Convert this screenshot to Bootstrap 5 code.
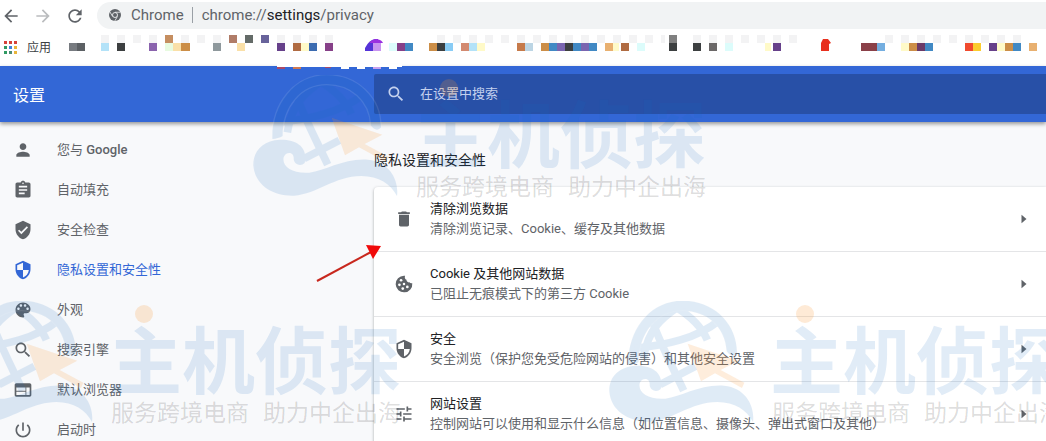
<!DOCTYPE html>
<html lang="zh-CN">
<head>
<meta charset="utf-8">
<meta name="viewport" content="width=device-width, initial-scale=1">
<title>设置 - 隐私设置和安全性</title>
<link href="https://cdn.jsdelivr.net/npm/bootstrap@5.3.0/dist/css/bootstrap.min.css" rel="stylesheet">
<style>
  body { font-family: Roboto, "Noto Sans CJK SC", sans-serif; font-size: 13px; line-height: 20px; color: #202124; background: #f8f9fb; }
  .ico { width: 20px; height: 20px; fill: #5f6368; flex: none; }
  .ico-off { fill: #babcbe; }
  .tool-btn { width: 32px; height: 30px; }
  .tool-btn .ico { margin-left: 1px; }
  .tool-row { height: 30px; }
  .url-pill { background: #f1f3f4; height: 27px; border-radius: 14px 0 0 14px; padding-left: 12px; margin-left: 1px; gap: 10px; font: 15px/20px Roboto, sans-serif; color: #5f6368; }
  .url-sep { width: 1px; height: 16px; background: #9aa0a6; margin: 0 -1px 0 -2px; }
  .url-text a { color: #202124; }
  .mark-row { height: 36px; font-size: 12px; }
  .apps { width: 69px; padding-left: 4px; gap: 9px; color: #3c4043; }
  .mosaic { height: 36px; overflow: visible; position: relative; z-index: 2; }
  .top-bar { background: #3367d6; height: 56px; box-shadow: 0 2px 4px rgba(0,0,0,.4); z-index: 1; }
  .top-title, .side { width: 374px; flex: none; }
  .top-title { font-size: 16px; line-height: 24px; color: #fff; padding: 4px 0 0 13px; }
  .search-box { background: #2850a7; height: 40px; border-radius: 2px 0 0 2px; padding-left: 12px; gap: 14px; }
  .search-box input { font-size: 13px; color: #d3dcf2; outline: 0; }
  .search-box input::placeholder { color: #c4d1ee; opacity: 1; }
  .search-box .ico { fill: #c4d1ee; }
  .side { padding-top: 8px; }
  .side a { height: 40px; flex: none; padding-left: 13px; gap: 24px; color: #5f6368; }
  .side .sel { color: #3367d6; }
  .side .sel .ico { fill: #3367d6; }
  .brand { font-weight: 500; }
  .sec-title { font-size: 14px; line-height: 24px; margin: 26px 0 15px; font-weight: 400; }
  .opts { background: #fff; border-radius: 4px 0 0 4px; box-shadow: 0 1px 3px rgba(60,64,67,.45); }
  .opt { height: 65px; padding: 0 12px 1px 20px; gap: 16px; border: 0; border-bottom: 1px solid #e4e5e7; background: none; color: #202124; }
  .opt small { font-size: 13px; color: #5f6368; }
  .marks-layer { inset: 0; pointer-events: none; z-index: 5; }
  .stamp { position: absolute; width: 460px; gap: 14px; }
  .stamp-a { left: 253px; top: 75px; }
  .stamp-b { left: -52px; top: 301px; }
  .stamp-c { left: 609px; top: 301px; }
  .stamp svg { width: 147px; height: 132px; flex: none; overflow: visible; }
  .stamp-name { font: 700 73px/72px "Noto Sans CJK SC", sans-serif; color: rgba(20,105,190,.13); padding-top: 19px; }
  .stamp-line { font: 23px/30px "Noto Sans CJK SC", sans-serif; color: rgba(0,0,0,.15); gap: 14px; margin: 4px 0 0 2px; }
  .stamp-dot { position: absolute; left: 187px; top: 4px; width: 18px; height: 18px; border-radius: 50%; background: rgba(250,150,50,.2); }
  .pointer { position: absolute; left: 315px; top: 242px; z-index: 6; }
</style>
</head>
<body class="vh-100 overflow-hidden position-relative d-flex flex-column">

<svg class="d-none">
  <symbol id="shield" viewBox="0 0 24 24"><path d="M12 1L3 5v6c0 5.55 3.84 10.74 9 12 5.16-1.26 9-6.45 9-12V5l-9-4zm0 10.99h7c-.53 4.12-3.28 7.79-7 8.94V12H5V6.3l7-3.11v8.8z"/></symbol>
  <symbol id="lens" viewBox="0 0 24 24"><path d="M15.5 14h-.79l-.28-.27C15.41 12.59 16 11.11 16 9.5 16 5.91 13.09 3 9.5 3S3 5.91 3 9.5 5.91 16 9.5 16c1.61 0 3.09-.59 4.23-1.57l.27.28v.79l5 4.99L20.49 19l-4.99-5zm-6 0C7.01 14 5 11.99 5 9.5S7.01 5 9.5 5 14 7.01 14 9.5 11.99 14 9.5 14z"/></symbol>
  <symbol id="caret" viewBox="0 0 24 24"><path d="M9 7l6 5-6 5z"/></symbol>
  <symbol id="globe" viewBox="27 33 441 396">
    <g opacity=".13" fill="#1469be">
      <path d="M85 225C82 120 150 32 248 32C340 32 412 100 411 190C402 202 390 198 380 184C376 110 320 62 248 62C170 62 116 130 116 216C108 222 96 224 85 225Z"/>
      <g fill="none" stroke="#1469be" stroke-width="23">
        <path d="M153 82C175 150 215 225 251 302"/><path d="M103 175C200 165 290 145 357 92"/><path d="M235 50C195 78 145 110 130 205"/><path d="M225 50C275 80 305 110 322 150"/><path d="M180 284L286 229"/>
      </g>
      <path d="M182 297C192 255 165 226 108 227C55 230 27 262 28 304C32 362 86 397 150 395C220 390 270 337 352 336C405 337 440 360 459 396C465 350 438 293 372 287C300 282 245 320 196 326C145 330 113 306 119 280C125 261 152 262 149 286C152 304 172 307 182 297Z"/>
    </g>
    <path d="M85 225C82 120 150 32 248 32C340 32 412 100 411 190M116 216C116 130 170 62 248 62C320 62 376 110 380 184" fill="none" stroke="#fff" stroke-opacity=".1" stroke-width="4"/>
    <path d="M263 161L415 212L362 240L433 278L426 294L345 250L303 274Z" fill="#fa9632" fill-opacity=".17"/>
  </symbol>
</svg>

<div class="tool-row bg-white d-flex align-items-center">
  <button class="btn border-0 p-0 tool-btn text-start" aria-label="后退"><svg class="ico" viewBox="0 0 24 24"><path d="M20 11H7.83l5.59-5.59L12 4l-8 8 8 8 1.41-1.41L7.83 13H20v-2z"/></svg></button>
  <button class="btn border-0 p-0 tool-btn text-start" aria-label="前进"><svg class="ico ico-off" viewBox="0 0 24 24"><path d="M12 4l-1.41 1.41L16.17 11H4v2h12.17l-5.58 5.59L12 20l8-8z"/></svg></button>
  <button class="btn border-0 p-0 tool-btn text-start" aria-label="重新加载"><svg class="ico" viewBox="0 0 24 24"><path d="M17.65 6.35C16.2 4.9 14.21 4 12 4c-4.42 0-7.99 3.58-7.99 8s3.57 8 7.99 8c3.73 0 6.84-2.55 7.73-6h-2.08c-.82 2.33-3.04 4-5.65 4-3.31 0-6-2.69-6-6s2.69-6 6-6c1.66 0 3.14.69 4.22 1.78L13 11h7V4l-2.35 2.35z"/></svg></button>
  <div class="url-pill flex-grow-1 d-flex align-items-center">
    <svg width="12" height="12" viewBox="0 0 24 24" class="flex-shrink-0"><circle cx="12" cy="12" r="12" fill="#5f6368"/><circle cx="12" cy="12" r="5" fill="#5f6368" stroke="#f1f3f4" stroke-width="1.8"/><path d="M12 6.500H22.500M7.200 15L2 6M16.800 15L11.500 24" stroke="#f1f3f4" stroke-width="1.600"/></svg>
    <span>Chrome</span><span class="url-sep"></span>
    <span class="url-text">chrome://<a class="text-decoration-none" href="#settings">settings</a>/privacy</span>
  </div>
</div>

<div class="mark-row bg-white d-flex">
  <a href="#apps" class="apps d-flex align-items-center text-decoration-none flex-shrink-0">
    <svg width="14" height="14" viewBox="0 0 14 14" shape-rendering="crispEdges"><path fill="#d5433a" d="M0 0h3v3H0zM5 0h3v3H5zM10 0h3v3h-3z"/><path fill="#2f9a62" d="M0 5h3v3H0zM0 10h3v3H0z"/><path fill="#3f83dc" d="M5 5h3v3H5z"/><path fill="#e9b53a" d="M10 5h3v3h-3zM10 10h3v3h-3z"/><path fill="#4b8b76" d="M5 10h3v3H5z"/></svg>
    应用</a>
  <svg class="mosaic flex-grow-1" viewBox="69 30 977 36" preserveAspectRatio="xMinYMin slice" shape-rendering="crispEdges" aria-hidden="true">
    <path d="M101 39H334M437 39H665M693 39H800M885 39H1027" stroke="#f3f3f4" stroke-width="8" stroke-dasharray="8 8"/>
    <g fill="none" stroke-width="8">
      <path stroke="#777b80" d="M69 47h8"/><path stroke="#5c6064" d="M77 47h8"/>
      <path stroke="#b3e2f8" d="M101 47h8M469 47h8"/>
      <path stroke="#3c3f40" d="M117 47h8M437 47h8M565 47h8M669 47h8M693 47h8"/>
      <path stroke="#8a63ad" d="M149 47h8"/><path stroke="#c58e60" d="M165 39h8"/>
      <path stroke="#e8fbe0" d="M165 47h8"/><path stroke="#fae0a8" d="M173 47h8M237 47h8"/>
      <path stroke="#cc8e47" d="M181 47h9M429 47h8M541 47h8M909 47h8M1005 47h8"/>
      <path stroke="#8e989c" d="M213 47h8"/><path stroke="#b07c68" d="M229 39h8"/><path stroke="#646b68" d="M245 39h8"/><path stroke="#68639b" d="M261 39h8"/>
      <path stroke="#66408a" d="M277 47h8M773 47h8M989 47h8"/>
      <path stroke="#b06b42" d="M293 47h8M621 47h8"/>
      <path stroke="#fffac8" d="M301 47h8M477 47h8M765 47h6M901 47h8M997 47h8M613 47h6"/>
      <path stroke="#3b6bb0" d="M309 47h8"/><path stroke="#864088" d="M325 47h8M397 47h8"/>
      <path stroke="#dcfcfb" d="M389 47h8M637 47h8M725 47h8"/>
      <path stroke="#4189c4" d="M405 47h8M549 47h8M573 47h8M589 47h8M925 47h8M1013 47h8"/>
      <path stroke="#89ccf5" d="M445 47h8"/><path stroke="#d38a70" d="M461 47h8"/>
      <path stroke="#c67a4a" d="M517 47h8"/><path stroke="#bcd5e4" d="M525 47h8"/>
      <path stroke="#7a65b0" d="M557 47h8M581 47h8"/><path stroke="#e8b070" d="M605 47h8M1029 47h8"/>
      <path stroke="#808080" d="M669 39h8"/><path stroke="#6b6868" d="M709 47h8"/>
      <path stroke="#8a4048" d="M861 47h16"/><path stroke="#74aee0" d="M877 47h8"/><path stroke="#6b3a68" d="M917 47h8"/>
      <path stroke="#f04a2e" d="M965 47h8"/><path stroke="#fbcc2e" d="M973 47h8"/>
    </g>
    <g shape-rendering="auto"><path fill="#5533d8" d="M365 51v-3q4-8 10-9h3v12z"/><path fill="#9b30e0" d="M369 43q3-4 8-4 5 1 6 4z"/><path fill="#c893f0" d="M373 43h8v8h-8z"/>
    <path fill="#e8301e" d="M821 51v-8l2-4h5l3 4-2 1v7z"/></g>
    <path fill="#fff" d="M277 64h125v3H277zM341 67h8v2h-8zM357 67h8v2h-8zM389 67h8v2h-8z"/>
    <path fill="#a84868" d="M277 67h8v2h-8zM325 67h6v1h-6z"/><path fill="#d07850" d="M293 67h8v2h-8z"/><path fill="#c8a0f0" d="M373 67h8v2h-8z"/>
  </svg>
</div>

<header class="top-bar d-flex align-items-center position-relative flex-shrink-0">
  <h1 class="top-title m-0 fw-normal">设置</h1>
  <label class="search-box flex-grow-1 d-flex align-items-center">
    <svg class="ico"><use href="#lens"/></svg>
    <input type="text" class="border-0 bg-transparent p-0 flex-grow-1" placeholder="在设置中搜索" aria-label="在设置中搜索">
  </label>
</header>

<div class="d-flex flex-grow-1 overflow-hidden">
  <nav class="side d-flex flex-column">
    <a href="#people" class="d-flex align-items-center text-decoration-none"><svg class="ico" viewBox="0 0 24 24"><path d="M12 12c2.210 0 4-1.790 4-4s-1.790-4-4-4-4 1.790-4 4 1.790 4 4 4zm0 2c-2.670 0-8 1.340-8 4v2h16v-2c0-2.660-5.330-4-8-4z"/></svg><span>您与 <span class="brand">Google</span></span></a>
    <a href="#autofill" class="d-flex align-items-center text-decoration-none"><svg class="ico" viewBox="0 0 24 24"><path d="M19 3h-4.180C14.400 1.840 13.300 1 12 1c-1.300 0-2.400.840-2.820 2H5c-1.100 0-2 .9-2 2v14c0 1.100.9 2 2 2h14c1.100 0 2-.9 2-2V5c0-1.100-.9-2-2-2zm-7 0c.55 0 1 .45 1 1s-.45 1-1 1-1-.45-1-1 .45-1 1-1zm2 14H7v-2h7v2zm3-4H7v-2h10v2zm0-4H7V7h10v2z"/></svg>自动填充</a>
    <a href="#check" class="d-flex align-items-center text-decoration-none"><svg class="ico" viewBox="0 0 24 24"><path d="M12 1L3 5v6c0 5.550 3.840 10.740 9 12 5.160-1.260 9-6.450 9-12V5l-9-4zm-2 16l-4-4 1.410-1.410L10 14.170l6.590-6.590L18 9l-8 8z"/></svg>安全检查</a>
    <a href="#privacy" class="sel d-flex align-items-center text-decoration-none" aria-current="page"><svg class="ico"><use href="#shield"/></svg>隐私设置和安全性</a>
    <a href="#appearance" class="d-flex align-items-center text-decoration-none"><svg class="ico" viewBox="0 0 24 24"><path d="M12 3c-4.970 0-9 4.030-9 9s4.030 9 9 9c.83 0 1.500-.67 1.500-1.500 0-.39-.15-.74-.39-1.010-.23-.26-.38-.61-.38-.99 0-.83.67-1.500 1.500-1.500H16c2.760 0 5-2.240 5-5 0-4.420-4.030-8-9-8zm-5.500 9c-.83 0-1.500-.67-1.500-1.500S5.670 9 6.500 9 8 9.670 8 10.500 7.330 12 6.500 12zm3-4C8.670 8 8 7.330 8 6.500S8.670 5 9.500 5s1.500.67 1.500 1.500S10.330 8 9.500 8zm5 0c-.83 0-1.500-.67-1.500-1.500S13.670 5 14.500 5s1.500.67 1.500 1.500S15.330 8 14.500 8zm3 4c-.83 0-1.500-.67-1.500-1.500S16.670 9 17.500 9s1.500.67 1.500 1.500-.67 1.500-1.500 1.500z"/></svg>外观</a>
    <a href="#search" class="d-flex align-items-center text-decoration-none"><svg class="ico"><use href="#lens"/></svg>搜索引擎</a>
    <a href="#browser" class="d-flex align-items-center text-decoration-none"><svg class="ico" viewBox="0 0 24 24"><path d="M20 4H4c-1.100 0-1.990.9-1.990 2L2 18c0 1.100.9 2 2 2h16c1.100 0 2-.9 2-2V6c0-1.100-.9-2-2-2zm-5 14H4v-4h11v4zm0-5H4V9h11v4zm5 5h-4V9h4v9z"/></svg>默认浏览器</a>
    <a href="#startup" class="d-flex align-items-center text-decoration-none"><svg class="ico" viewBox="0 0 24 24"><path d="M13 3h-2v10h2V3zm4.830 2.170l-1.420 1.420C17.990 7.860 19 9.810 19 12c0 3.870-3.130 7-7 7s-7-3.130-7-7c0-2.190 1.010-4.140 2.580-5.420L6.170 5.170C4.230 6.820 3 9.260 3 12c0 4.970 4.030 9 9 9s9-4.030 9-9c0-2.740-1.230-5.180-3.170-6.830z"/></svg>启动时</a>
  </nav>

  <main class="flex-grow-1">
    <h2 class="sec-title">隐私设置和安全性</h2>
    <div class="opts">
      <button class="opt w-100 d-flex align-items-center text-start"><svg class="ico" viewBox="0 0 24 24"><path d="M6 19c0 1.100.9 2 2 2h8c1.100 0 2-.9 2-2V7H6v12zM19 4h-3.500l-1-1h-5l-1 1H5v2h14V4z"/></svg><span class="flex-grow-1">清除浏览数据<small class="d-block">清除浏览记录、Cookie、缓存及其他数据</small></span><svg class="ico"><use href="#caret"/></svg></button>
      <button class="opt w-100 d-flex align-items-center text-start"><svg class="ico" viewBox="0 0 24 24"><path d="M12 2a10 10 0 1 0 9.950 9c-1.300.5-2.700.1-3.450-1-1.900.4-3.700-1-3.500-3-1.800-.6-2.600-2.900-1.700-4.900A10 10 0 0 0 12 2z"/><g fill="#fff"><circle cx="8.500" cy="7.500" r="1.600"/><circle cx="6.500" cy="13" r="1.600"/><circle cx="12" cy="12" r="1.500"/><circle cx="10.500" cy="17.500" r="1.600"/><circle cx="16" cy="15.500" r="1.600"/></g></svg><span class="flex-grow-1">Cookie 及其他网站数据<small class="d-block">已阻止无痕模式下的第三方 Cookie</small></span><svg class="ico"><use href="#caret"/></svg></button>
      <button class="opt w-100 d-flex align-items-center text-start"><svg class="ico"><use href="#shield"/></svg><span class="flex-grow-1">安全<small class="d-block">安全浏览（保护您免受危险网站的侵害）和其他安全设置</small></span><svg class="ico"><use href="#caret"/></svg></button>
      <button class="opt w-100 d-flex align-items-center text-start"><svg class="ico" viewBox="0 0 24 24"><path d="M3 17v2h6v-2H3zM3 5v2h10V5H3zm10 16v-2h8v-2h-8v-2h-2v6h2zM7 9v2H3v2h4v2h2V9H7zm14 4v-2H11v2h10zm-6-4h2V7h4V5h-4V3h-2v6z"/></svg><span class="flex-grow-1">网站设置<small class="d-block">控制网站可以使用和显示什么信息（如位置信息、摄像头、弹出式窗口及其他）</small></span><svg class="ico"><use href="#caret"/></svg></button>
    </div>
  </main>
</div>

<!-- repeated brand stamp laid over the page -->
<div class="marks-layer position-absolute overflow-hidden">
  <div class="stamp stamp-a d-flex"><svg><use href="#globe"/></svg><span class="stamp-dot"></span><div class="text-nowrap"><div class="stamp-name">主机侦探</div><div class="stamp-line d-flex"><span>服务跨境电商</span><span>助力中企出海</span></div></div></div>
  <div class="stamp stamp-b d-flex"><svg><use href="#globe"/></svg><span class="stamp-dot"></span><div class="text-nowrap"><div class="stamp-name">主机侦探</div><div class="stamp-line d-flex"><span>服务跨境电商</span><span>助力中企出海</span></div></div></div>
  <div class="stamp stamp-c d-flex"><svg><use href="#globe"/></svg><span class="stamp-dot"></span><div class="text-nowrap"><div class="stamp-name">主机侦探</div><div class="stamp-line d-flex"><span>服务跨境电商</span><span>助力中企出海</span></div></div></div>
</div>

<svg class="pointer" width="68" height="42" viewBox="0 0 68 42"><path d="M2 39L56 10" stroke="#c8281e" stroke-width="2"/><path d="M66 4L51 3L58 17Z" fill="#f00a0a"/></svg>

<script src="https://cdn.jsdelivr.net/npm/bootstrap@5.3.0/dist/js/bootstrap.bundle.min.js"></script>
</body>
</html>
